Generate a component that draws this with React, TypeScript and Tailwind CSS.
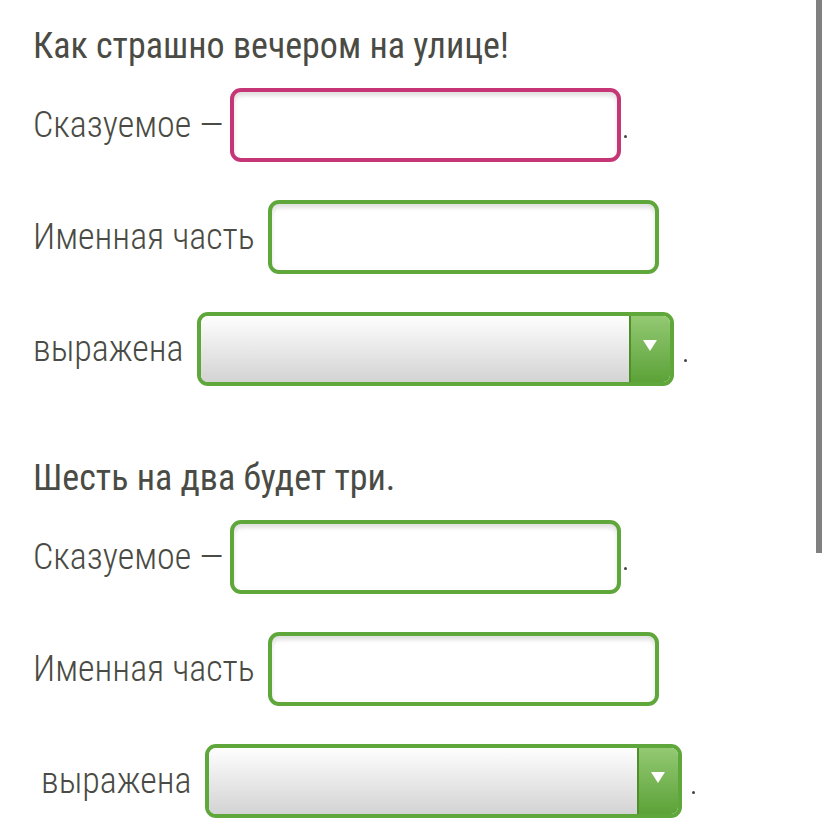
const font = { fontFamily: '"Roboto Condensed", Roboto, sans-serif' };

function Field({ pink, w }: { pink?: boolean; w: string }) {
  return (
    <div
      className={`h-[74px] ${w} rounded-[11px] border-4 bg-white shadow-[inset_0_4px_4px_rgba(0,0,0,0.12)] ${
        pink ? "border-[#c63676]" : "border-[#5fa63b]"
      }`}
    />
  );
}

function Select() {
  return (
    <div className="flex h-[74px] w-[477px] overflow-hidden rounded-[11px] border-4 border-[#5fa63b]">
      <div className="flex-1 bg-gradient-to-b from-[#fefefe] to-[#d3d3d3]" />
      <div className="flex w-[41px] items-center justify-center border-l-2 border-[#4e8f2c] bg-gradient-to-b from-[#93c972] to-[#5ca237]">
        <svg width="16" height="13" viewBox="0 0 16 13" className="-mt-[8px]">
          <path d="M1 1h14L8 12z" fill="#fff" />
        </svg>
      </div>
    </div>
  );
}

function Dot({ far }: { far?: boolean }) {
  return (
    <span
      className={`mt-[22px] h-[3px] w-[3px] rounded-full bg-[#444] ${far ? "ml-[10px]" : "ml-[3px]"}`}
    />
  );
}

function Block({ title, pink, lead }: { title: string; pink?: boolean; lead?: boolean }) {
  return (
    <div className="flex flex-col">
      <h2 className="text-[36px] font-normal leading-[40px] text-[#4a4b44]">{title}</h2>
      <div className="mt-[22px] flex items-center">
        <span className="text-[36px] font-light text-[#4a4b44]">Сказуемое —</span>
        <div className="ml-[7px]">
          <Field pink={pink} w="w-[391px]" />
        </div>
        <Dot />
      </div>
      <div className="mt-[38px] flex items-center">
        <span className="text-[36px] font-light text-[#4a4b44]">Именная часть</span>
        <div className="ml-[13px]">
          <Field w="w-[391px]" />
        </div>
      </div>
      <div className="mt-[38px] flex items-center">
        <span className={`text-[36px] font-light text-[#4a4b44] ${lead ? "pl-[8px]" : ""}`}>выражена</span>
        <div className="ml-[13px]">
          <Select />
        </div>
        <Dot far />
      </div>
    </div>
  );
}

export default function App() {
  return (
    <div className="relative h-[828px] w-[828px] overflow-hidden bg-white" style={font}>
      <div className="flex flex-col gap-[72px] pl-[33px] pt-[26px]">
        <Block title="Как страшно вечером на улице!" pink />
        <Block title="Шесть на два будет три." lead />
      </div>
      <div className="absolute right-[6px] top-0 h-[553px] w-[6px] bg-[#808080]" />
    </div>
  );
}
